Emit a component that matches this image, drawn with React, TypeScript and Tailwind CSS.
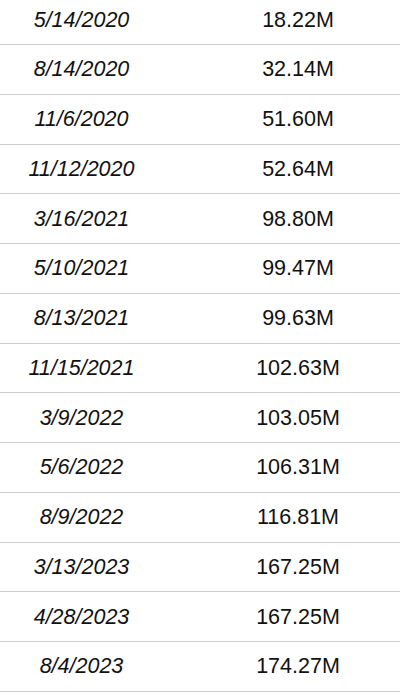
const rows: [string, string][] = [
  ["5/14/2020", "18.22M"],
  ["8/14/2020", "32.14M"],
  ["11/6/2020", "51.60M"],
  ["11/12/2020", "52.64M"],
  ["3/16/2021", "98.80M"],
  ["5/10/2021", "99.47M"],
  ["8/13/2021", "99.63M"],
  ["11/15/2021", "102.63M"],
  ["3/9/2022", "103.05M"],
  ["5/6/2022", "106.31M"],
  ["8/9/2022", "116.81M"],
  ["3/13/2023", "167.25M"],
  ["4/28/2023", "167.25M"],
  ["8/4/2023", "174.27M"],
];

export default function App() {
  return (
    <div className="h-[700px] w-[400px] overflow-hidden bg-white font-['Liberation_Sans',Arial,sans-serif] text-[21.5px] text-[#111]">
      <div className="mt-[-4.75px]">
        {rows.map(([date, value]) => (
          <div
            key={date}
            className="grid h-[49.75px] grid-cols-[163px_1fr] items-center border-b border-[#cccccc]"
          >
            <span className="text-center italic">{date}</span>
            <span className="pl-[33px] text-center">{value}</span>
          </div>
        ))}
      </div>
    </div>
  );
}
